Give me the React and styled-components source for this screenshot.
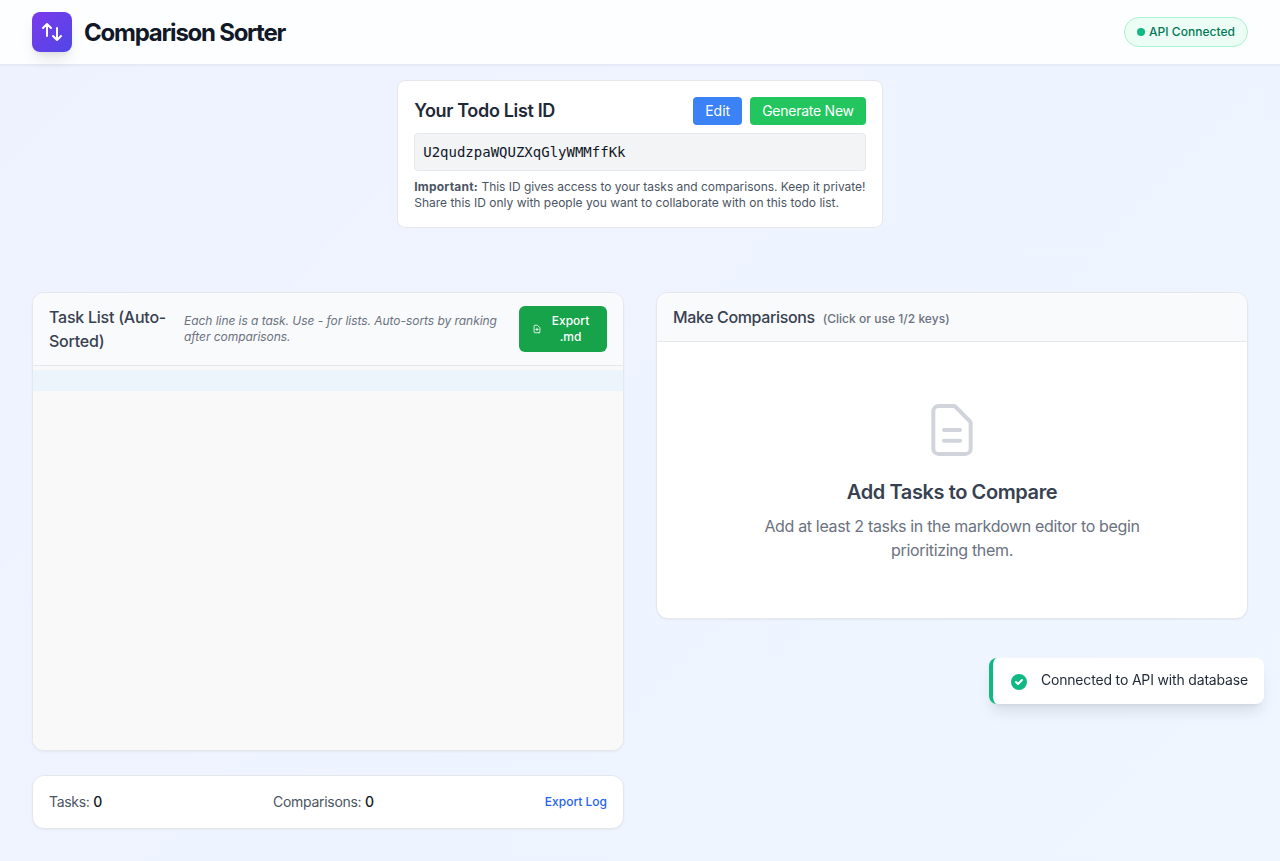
import React from "react";
import styled, { createGlobalStyle } from "styled-components";

const GlobalStyle = createGlobalStyle`
  *, *::before, *::after { box-sizing: border-box; }
  body {
    margin: 0;
    font-family: Inter, "Liberation Sans", sans-serif;
    font-size: 16px;
    line-height: 24px;
    color: #111827;
  }
  h1, h2, h3, p { margin: 0; }
  button { font-family: inherit; border: 0; cursor: pointer; }
`;

const Page = styled.div`
  min-height: 861px;
  background: linear-gradient(135deg, #eef2ff, #eff6ff);
`;

const Header = styled.header`
  height: 65px;
  padding: 0 32px;
  display: flex;
  align-items: center;
  justify-content: space-between;
  background: #fdfeff;
  border-bottom: 1px solid #e5e9f5;
  box-shadow: 0 1px 2px rgba(0, 0, 0, 0.04);
`;

const Brand = styled.div`
  display: flex;
  align-items: center;
  gap: 12px;
`;

const Logo = styled.div`
  width: 40px;
  height: 40px;
  border-radius: 8px;
  display: grid;
  place-items: center;
  background: linear-gradient(135deg, #7c3aed, #4f46e5);
  box-shadow: 0 10px 15px -3px rgba(0, 0, 0, 0.1), 0 4px 6px -4px rgba(0, 0, 0, 0.1);
`;

const AppTitle = styled.h1`
  padding-top: 2px;
  font-size: 24px;
  line-height: 32px;
  font-weight: 700;
  letter-spacing: -1.25px;
  color: #111827;
`;

const Status = styled.div`
  display: flex;
  align-items: center;
  gap: 4px;
  padding: 6px 12px;
  border: 1px solid #a7f3d0;
  border-radius: 999px;
  background: #ecfdf5;
  color: #047857;
  font-size: 12px;
  line-height: 16px;
  font-weight: 500;
  letter-spacing: 0.03px;
`;

const Dot = styled.span`
  width: 8px;
  height: 8px;
  border-radius: 50%;
  background: #10b981;
`;

const IdCard = styled.section`
  width: 485.6px;
  margin: 15px auto 0;
  padding: 16px;
  border: 1px solid #e5e7eb;
  border-radius: 8px;
  background: #fff;
`;

const IdTop = styled.div`
  display: flex;
  align-items: center;
  justify-content: space-between;
  margin-bottom: 8px;
`;

const IdTitle = styled.h2`
  font-size: 18px;
  line-height: 28px;
  font-weight: 600;
  letter-spacing: -0.34px;
  color: #1f2937;
`;

const Actions = styled.div`
  display: flex;
  gap: 8px;
`;

const Action = styled.button`
  padding: 4px 12px;
  border-radius: 4px;
  background: ${(p) => p.$color};
  color: #fff;
  font-size: 14px;
  line-height: 20px;
  letter-spacing: ${(p) => p.$tracking || 0}px;
  white-space: nowrap;
`;

const IdValue = styled.div`
  padding: 8px;
  border: 1px solid #e5e7eb;
  border-radius: 4px;
  background: #f3f4f6;
  font-family: "DejaVu Sans Mono", monospace;
  font-size: 14px;
  line-height: 20px;
`;

const IdNote = styled.p`
  margin-top: 8px;
  font-size: 12px;
  line-height: 16px;
  color: #4b5563;
  white-space: nowrap;
  strong { letter-spacing: 0.22px; }
`;

const NoteLead = styled.span`
  letter-spacing: -0.028px;
`;

const Columns = styled.main`
  display: grid;
  grid-template-columns: 1fr 1fr;
  align-items: start;
  gap: 32px;
  padding: 64px 32px 32px;
`;

const Stack = styled.div`
  display: grid;
  gap: 24px;
`;

const Card = styled.section`
  overflow: hidden;
  border: 1px solid #e5e7eb;
  border-radius: 12px;
  background: #fff;
  box-shadow: 0 1px 2px rgba(0, 0, 0, 0.05);
`;

const CardHeader = styled.div`
  display: flex;
  align-items: ${(p) => p.$align || "center"};
  gap: ${(p) => p.$gap || 16}px;
  padding: 12px 16px;
  border-bottom: 1px solid #e5e7eb;
  background: #f9fafb;
`;

const CardTitle = styled.h2`
  flex: none;
  width: ${(p) => (p.$width ? `${p.$width}px` : "auto")};
  font-size: 16px;
  line-height: 24px;
  font-weight: 500;
  letter-spacing: ${(p) => p.$tracking}px;
  color: #374151;
`;

const Hint = styled.span`
  flex: 1;
  font-size: 12px;
  line-height: 16px;
  font-style: italic;
  letter-spacing: -0.05px;
  color: #6b7280;
`;

const KeyHint = styled.span`
  font-size: 12px;
  line-height: 16px;
  font-weight: 500;
  letter-spacing: 0.03px;
  color: #6b7280;
`;

const ExportButton = styled.button`
  display: flex;
  align-items: center;
  width: 88px;
  padding: 7px 13px;
  border-radius: 6px;
  background: #16a34a;
  color: #fff;
  font-size: 12px;
  line-height: 16px;
  font-weight: 500;
  svg { flex: none; margin-right: 5px; }
`;

const ExportLabel = styled.span`
  flex: 1;
  text-align: center;
`;

const Editor = styled.div`
  height: 384px;
  padding-top: 4px;
  background: #f9f9f9;
`;

const ActiveLine = styled.div`
  height: 21px;
  background: #ecf5fb;
`;

const Stats = styled(Card)`
  display: flex;
  align-items: center;
  justify-content: space-between;
  padding: 16px;
  font-size: 14px;
  line-height: 20px;
  letter-spacing: -0.3px;
  color: #4b5563;
`;

const Count = styled.span`
  font-weight: 500;
  color: #111827;
`;

const LogLink = styled.button`
  padding: 0;
  background: none;
  color: #2563eb;
  font-size: 12px;
  line-height: 16px;
  font-weight: 500;
`;

const Empty = styled.div`
  display: flex;
  flex-direction: column;
  align-items: center;
  padding: 56px 32px;
  text-align: center;
`;

const EmptyTitle = styled.h3`
  margin: 16px 0 8px;
  font-size: 20px;
  line-height: 28px;
  font-weight: 600;
  letter-spacing: -0.4px;
  color: #374151;
`;

const EmptyText = styled.p`
  max-width: 384px;
  letter-spacing: -0.34px;
  color: #6b7280;
`;

const Toast = styled.div`
  position: fixed;
  top: 658px;
  right: 16px;
  display: flex;
  align-items: flex-start;
  gap: 12px;
  padding: 12px 16px;
  border-left: 4px solid #10b981;
  border-radius: 8px;
  background: #fff;
  box-shadow: 0 10px 15px -3px rgba(0, 0, 0, 0.1), 0 4px 6px -4px rgba(0, 0, 0, 0.1);
  color: #1f2937;
  font-size: 14px;
  line-height: 20px;
  letter-spacing: -0.17px;
  svg { display: block; margin-top: 2px; }
`;

const OutlineIcon = ({ width, height = width, stroke = 2, color = "#fff", d }) => (
  <svg width={width} height={height} viewBox="0 0 24 24" fill="none" stroke={color}
    strokeWidth={stroke} strokeLinecap="round" strokeLinejoin="round">
    <path d={d} />
  </svg>
);

const PAGE_OUTLINE =
  "H7a2 2 0 01-2-2V5a2 2 0 012-2h5.586a1 1 0 01.707.293l5.414 5.414a1 1 0 01.293.707V19a2 2 0 01-2 2z";

export default function App() {
  return (
    <Page>
      <GlobalStyle />
      <Header>
        <Brand>
          <Logo>
            <OutlineIcon width={24} d="M7 16V4m0 0L3 8m4-4l4 4m6 0v12m0 0l4-4m-4 4l-4-4" />
          </Logo>
          <AppTitle>Comparison Sorter</AppTitle>
        </Brand>
        <Status><Dot />API Connected</Status>
      </Header>

      <IdCard>
        <IdTop>
          <IdTitle>Your Todo List ID</IdTitle>
          <Actions>
            <Action $color="#3b82f6">Edit</Action>
            <Action $color="#22c55e" $tracking={-0.25}>Generate New</Action>
          </Actions>
        </IdTop>
        <IdValue>U2qudzpaWQUZXqGlyWMMffKk</IdValue>
        <IdNote>
          <strong>Important:</strong>
          <NoteLead> This ID gives access to your tasks and comparisons. Keep it private!</NoteLead>
          <br />
          Share this ID only with people you want to collaborate with on this todo list.
        </IdNote>
      </IdCard>

      <Columns>
        <Stack>
          <Card>
            <CardHeader>
              <CardTitle $width={119} $tracking={-0.24}>Task List (Auto-<wbr />Sorted)</CardTitle>
              <Hint>Each line is a task. Use - for lists. Auto-sorts by ranking after comparisons.</Hint>
              <ExportButton>
                <OutlineIcon width={10} height={16} d={`M12 10v6m-3-3h6m2 8${PAGE_OUTLINE}`} />
                <ExportLabel>Export .md</ExportLabel>
              </ExportButton>
            </CardHeader>
            <Editor><ActiveLine /></Editor>
          </Card>
          <Stats>
            <span>Tasks: <Count>0</Count></span>
            <span>Comparisons: <Count>0</Count></span>
            <LogLink>Export Log</LogLink>
          </Stats>
        </Stack>

        <Card>
          <CardHeader $align="baseline" $gap={8}>
            <CardTitle $tracking={-0.37}>Make Comparisons</CardTitle>
            <KeyHint>(Click or use 1/2 keys)</KeyHint>
          </CardHeader>
          <Empty>
            <OutlineIcon width={64} stroke={1.5} color="#d1d5db" d={`M9 12h6m-6 4h6m2 5${PAGE_OUTLINE}`} />
            <EmptyTitle>Add Tasks to Compare</EmptyTitle>
            <EmptyText>Add at least 2 tasks in the markdown editor to begin prioritizing them.</EmptyText>
          </Empty>
        </Card>
      </Columns>

      <Toast>
        <svg width="20" height="20" viewBox="0 0 20 20" fill="#10b981">
          <path fillRule="evenodd" clipRule="evenodd" d="M10 18a8 8 0 100-16 8 8 0 000 16zm3.707-9.293a1 1 0 00-1.414-1.414L9 10.586 7.707 9.293a1 1 0 00-1.414 1.414l2 2a1 1 0 001.414 0l4-4z" />
        </svg>
        <span>Connected to API with database</span>
      </Toast>
    </Page>
  );
}
